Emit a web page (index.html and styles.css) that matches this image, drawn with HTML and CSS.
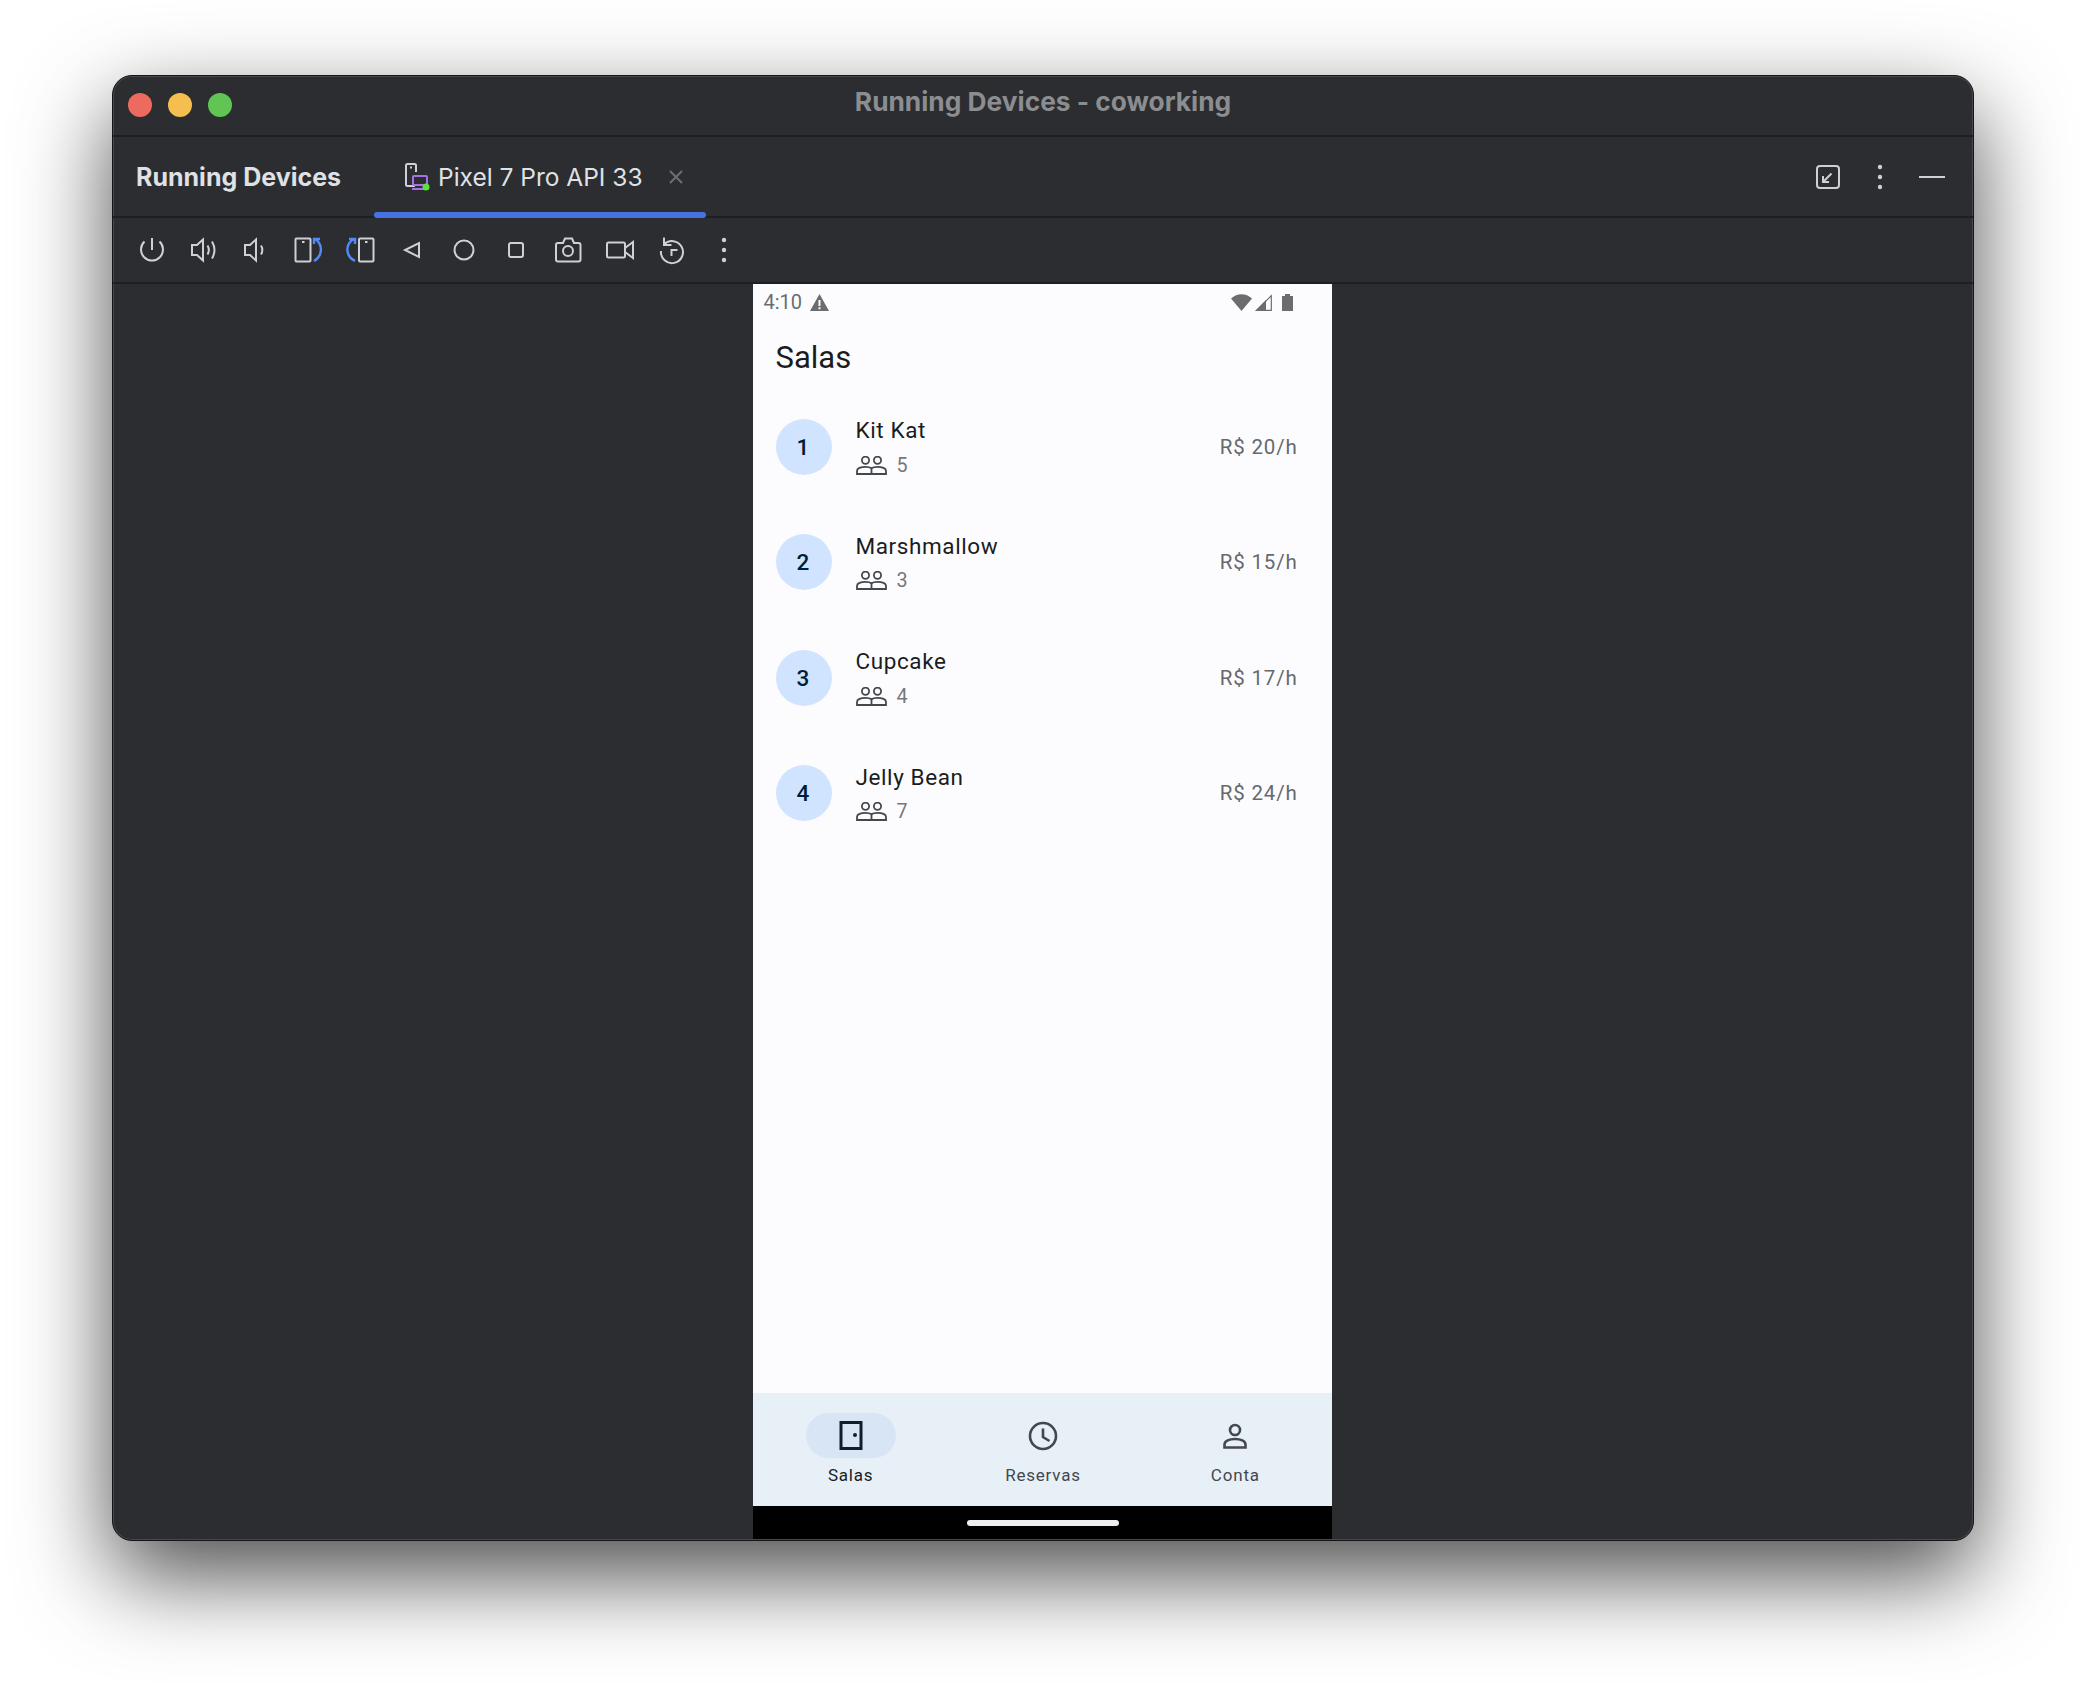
FILE: index.html
```html
<!DOCTYPE html>
<html lang="en">
<head>
  <meta charset="UTF-8">
  <title>Running Devices - coworking</title>
  <link rel="stylesheet" href="styles.css">
</head>
<body>
  <svg class="defs" width="0" height="0">
    <symbol id="people" viewBox="0 0 31 19">
      <circle cx="9.5" cy="4.2" r="3.6"/>
      <circle cx="21.5" cy="4.2" r="3.6"/>
      <path d="M1 18v-3.2c0-2.4 3.8-4 8.5-4 2.6 0 4.800.5 6 1.400 1.200-.9 3.400-1.400 6-1.400 4.700 0 8.500 1.600 8.500 4V18z"/>
      <path d="M15.500 12.200V18"/>
    </symbol>
  </svg>

  <div class="window">
    <div class="titlebar">
      <div class="lights">
        <span class="light red"></span>
        <span class="light yellow"></span>
        <span class="light green"></span>
      </div>
      <div class="window-title">Running Devices - coworking</div>
    </div>

    <div class="tabbar">
      <div class="tool-name">Running Devices</div>
      <div class="tab">
        <svg class="tab-icon" width="27" height="28" viewBox="0 0 27 28">
          <path class="line" d="M11 23H3.500a1.500 1.500 0 0 1-1.500-1.500V2.500A1.500 1.500 0 0 1 3.500 1h7A1.500 1.500 0 0 1 12 2.500V9"/>
          <path class="line" d="M6 4.500h2"/>
          <rect class="purple" x="9" y="13" width="14" height="9" rx="1"/>
          <path class="purple" d="M8 26h12"/>
          <circle cx="22" cy="24" r="3.500" fill="#57e33b"/>
        </svg>
        <span class="tab-label">Pixel 7 Pro API 33</span>
        <svg class="tab-close" width="14" height="14" viewBox="0 0 14 14"><path d="M1 1l12 12M13 1L1 13"/></svg>
      </div>
      <div class="tab-actions">
        <svg class="line" width="24" height="24" viewBox="0 0 24 24">
          <rect x="1" y="1" width="22" height="22" rx="3"/>
          <path d="M15.500 8.500L7 17M7 11v6h6"/>
        </svg>
        <svg width="8" height="26" viewBox="0 0 8 26">
          <circle class="dot" cx="4" cy="3" r="2.200"/><circle class="dot" cx="4" cy="13" r="2.200"/><circle class="dot" cx="4" cy="23" r="2.200"/>
        </svg>
        <span class="minimize"></span>
      </div>
    </div>

    <div class="toolbar">
      <svg class="line" width="32" height="32" viewBox="0 0 32 32"><path d="M8.500 7.500a11 11 0 1 0 15 0M16 4v12"/></svg>
      <svg class="line" width="32" height="32" viewBox="0 0 32 32"><path d="M4 11h5l6-5.500v21L9 21H4zM19.500 11.500c1.800 3 1.800 6 0 9M24 7.500c3.200 5.500 3.200 11.500 0 17"/></svg>
      <svg class="line" width="32" height="32" viewBox="0 0 32 32"><path d="M5 11h5l6-5.500v21L10 21H5zM21 11.500c1.800 3 1.800 6 0 9"/></svg>
      <svg width="32" height="32" viewBox="0 0 32 32">
        <rect class="line" x="3.500" y="4.500" width="15" height="23" rx="1"/>
        <path class="line" d="M10 8h2.500"/>
        <path class="blue" d="M23 5c8 5 8 17-1 22M22 10V5h6"/>
      </svg>
      <svg width="32" height="32" viewBox="0 0 32 32">
        <rect class="line" x="15" y="4.500" width="14.500" height="23" rx="1"/>
        <path class="line" d="M21 8h2.500"/>
        <path class="blue" d="M10 5c-9 5-9 17 1 22M11 10V5H5"/>
      </svg>
      <svg class="line" width="32" height="32" viewBox="0 0 32 32"><path d="M23 9v14L9 16z"/></svg>
      <svg class="line" width="32" height="32" viewBox="0 0 32 32"><circle cx="16" cy="16" r="9.500"/></svg>
      <svg class="line" width="32" height="32" viewBox="0 0 32 32"><rect x="9" y="9" width="14" height="14" rx="2"/></svg>
      <svg class="line" width="32" height="32" viewBox="0 0 32 32">
        <path d="M4 11a2 2 0 0 1 2-2h5l2-4.500h7L22 9h4.500a2 2 0 0 1 2 2v14.500a2 2 0 0 1-2 2H6a2 2 0 0 1-2-2z"/>
        <circle cx="16" cy="17" r="5"/>
      </svg>
      <svg class="line" width="32" height="32" viewBox="0 0 32 32"><rect x="3" y="8.500" width="18" height="15" rx="1.500"/><path d="M21 14l8-6v16l-8-6"/></svg>
      <svg class="line" width="32" height="32" viewBox="0 0 32 32"><path d="M8 3.500V11h7.500M8 10.500A11 11 0 1 1 5 17"/><path d="M15.500 22v-6h6"/></svg>
      <svg width="8" height="26" viewBox="0 0 8 26">
        <circle class="dot" cx="4" cy="3" r="2.200"/><circle class="dot" cx="4" cy="13" r="2.200"/><circle class="dot" cx="4" cy="23" r="2.200"/>
      </svg>
    </div>

    <div class="device-area">
      <div class="phone">
        <div class="statusbar">
          <span class="clock">4:10</span>
          <svg class="status-icon warn" width="19" height="17" viewBox="0 0 19 17"><path d="M9.500 0L19 17H0zM8.500 6v6h2V6zm0 7.200v2h2v-2z" fill-rule="evenodd"/></svg>
          <span class="status-right">
            <svg class="status-icon" width="21" height="17" viewBox="0 0 21 17"><path d="M0 4.500C6-1.200 15-1.200 21 4.500L10.500 17z"/></svg>
            <svg width="17" height="17" viewBox="0 0 17 17"><path d="M16.300 1.700v14.700H1.700z" fill="none" stroke="#6b6c70" stroke-width="1.200"/><path d="M11 6v11H0z" fill="#6b6c70"/></svg>
            <svg class="status-icon" width="11" height="17" viewBox="0 0 11 17"><path d="M3 0h5v2h3v15H0V2h3z"/></svg>
          </span>
        </div>

        <h1 class="app-title">Salas</h1>

        <ul class="room-list">
          <li class="room">
            <div class="room-number">1</div>
            <div class="room-info">
              <div class="room-name">Kit Kat</div>
              <div class="room-seats">
                <svg class="people" width="31" height="19"><use href="#people"/></svg>
                <span>5</span>
              </div>
            </div>
            <div class="room-price">R$ 20/h</div>
          </li>
          <li class="room">
            <div class="room-number">2</div>
            <div class="room-info">
              <div class="room-name">Marshmallow</div>
              <div class="room-seats">
                <svg class="people" width="31" height="19"><use href="#people"/></svg>
                <span>3</span>
              </div>
            </div>
            <div class="room-price">R$ 15/h</div>
          </li>
          <li class="room">
            <div class="room-number">3</div>
            <div class="room-info">
              <div class="room-name">Cupcake</div>
              <div class="room-seats">
                <svg class="people" width="31" height="19"><use href="#people"/></svg>
                <span>4</span>
              </div>
            </div>
            <div class="room-price">R$ 17/h</div>
          </li>
          <li class="room">
            <div class="room-number">4</div>
            <div class="room-info">
              <div class="room-name">Jelly Bean</div>
              <div class="room-seats">
                <svg class="people" width="31" height="19"><use href="#people"/></svg>
                <span>7</span>
              </div>
            </div>
            <div class="room-price">R$ 24/h</div>
          </li>
        </ul>

        <nav class="bottom-nav">
          <div class="nav-item active">
            <div class="nav-pill">
              <svg class="nav-icon" width="24" height="29" viewBox="0 0 24 29">
                <path d="M2 27.500V1.500h20v26z"/>
                <circle cx="16" cy="14" r="2" class="nav-dot"/>
              </svg>
            </div>
            <span>Salas</span>
          </div>
          <div class="nav-item">
            <div class="nav-pill">
              <svg class="nav-icon" width="30" height="30" viewBox="0 0 30 30">
                <circle cx="15" cy="15" r="13"/>
                <path d="M15 7.500V16l6.500 4"/>
              </svg>
            </div>
            <span>Reservas</span>
          </div>
          <div class="nav-item">
            <div class="nav-pill">
              <svg class="nav-icon" width="26" height="26" viewBox="0 0 26 26">
                <circle cx="13" cy="7" r="5"/>
                <path d="M2.500 24.500v-3c0-3.500 5-5.500 10.500-5.500s10.500 2 10.500 5.500v3z"/>
              </svg>
            </div>
            <span>Conta</span>
          </div>
        </nav>

        <div class="gesture-bar"><span class="handle"></span></div>
      </div>
    </div>
  </div>
</body>
</html>
```
FILE: styles.css
```css
html, body {
  margin: 0;
  height: 100%;
}

body {
  background: #fff;
  padding: 75px 112px 147px 112px;
  box-sizing: border-box;
  height: 1688px;
  overflow: hidden;
  font-family: Inter, "Liberation Sans", sans-serif;
}

.defs {
  position: absolute;
}

.window {
  height: 100%;
  box-sizing: border-box;
  display: flex;
  flex-direction: column;
  background: #2b2d30;
  border: 1px solid #151517;
  border-radius: 20px;
  box-shadow: inset 0 0 0 1px #47494c, 0 35px 90px rgba(0, 0, 0, 0.7);
  overflow: hidden;
}

/* title bar */
.titlebar {
  height: 59px;
  flex: none;
  display: flex;
  align-items: center;
  position: relative;
  border-bottom: 2px solid #1e1f22;
}

.lights {
  display: flex;
  gap: 16px;
  padding: 0 0 2px 15px;
}

.light {
  width: 24px;
  height: 24px;
  border-radius: 50%;
}

.red { background: #ed6a5e; }
.yellow { background: #f4bf4f; }
.green { background: #61c554; }

.window-title {
  position: absolute;
  left: 0;
  right: 0;
  top: 10px;
  text-align: center;
  color: #8b8d91;
  font-size: 26.300px;
  font-weight: 700;
}

/* tab row */
.tabbar {
  height: 79px;
  flex: none;
  display: flex;
  align-items: center;
  padding-left: 23px;
  border-bottom: 2px solid #1e1f22;
}

.tool-name {
  width: 238px;
  padding-top: 1px;
  color: #dfe1e5;
  font-size: 25px;
  font-weight: 700;
  white-space: nowrap;
}

.tab {
  width: 332px;
  height: 100%;
  box-sizing: border-box;
  display: flex;
  align-items: center;
  padding-left: 30px;
  position: relative;
}

.tab::after {
  content: "";
  position: absolute;
  left: 0;
  right: 0;
  bottom: -2px;
  height: 6px;
  border-radius: 3px;
  background: #4672e4;
}

.tab-icon {
  flex: none;
  margin-right: 7px;
}

.tab-label {
  color: #dfe1e5;
  font-size: 24.500px;
  white-space: nowrap;
}

.tab-close {
  margin-left: 26px;
  fill: none;
  stroke: #6f7175;
  stroke-width: 1.800;
}

.tab-actions {
  margin-left: auto;
  display: flex;
  align-items: center;
  padding-right: 28px;
}

.tab-actions svg:nth-child(2) {
  margin-left: 36px;
}

.minimize {
  width: 26px;
  height: 2px;
  margin-left: 35px;
  background: #ced0d6;
}

/* toolbar */
.toolbar {
  height: 64px;
  flex: none;
  display: flex;
  align-items: center;
  gap: 20px;
  padding-left: 23px;
  border-bottom: 2px solid #1e1f22;
}

.toolbar > svg:last-child {
  margin-left: 12px;
}

.line {
  fill: none;
  stroke: #ced0d6;
  stroke-width: 2;
}

.blue {
  fill: none;
  stroke: #548af7;
  stroke-width: 2.400;
}

.purple {
  fill: none;
  stroke: #a571e6;
  stroke-width: 2;
}

.dot {
  fill: #ced0d6;
}

/* device */
.device-area {
  flex: 1;
  min-height: 0;
  display: flex;
  justify-content: center;
  padding-right: 2px;
  padding-bottom: 1px;
}

.phone {
  width: 579px;
  display: flex;
  flex-direction: column;
  background: #fcfcff;
  font-family: Roboto, "Liberation Sans", sans-serif;
}

.statusbar {
  height: 36px;
  flex: none;
  display: flex;
  align-items: center;
  padding: 0 39px 0 11px;
  color: #6b6c70;
  font-size: 20px;
}

.status-icon {
  fill: #6b6c70;
}

.warn {
  margin-left: 8px;
}

.status-right {
  margin-left: auto;
  display: flex;
  gap: 3px;
  align-items: center;
}

.status-right svg:last-child {
  margin-left: 7px;
}

.app-title {
  margin: 0;
  height: 69px;
  box-sizing: border-box;
  padding: 5px 23px 0;
  display: flex;
  align-items: center;
  color: #1a1c1e;
  font-size: 31px;
  font-weight: 400;
}

.room-list {
  list-style: none;
  margin: 0;
  padding: 0;
}

.room {
  height: 115.500px;
  box-sizing: border-box;
  display: flex;
  align-items: center;
  padding: 0 34px 0 23px;
}

.room-number {
  width: 56px;
  height: 56px;
  flex: none;
  border-radius: 50%;
  display: flex;
  align-items: center;
  justify-content: center;
  background: #d1e4ff;
  color: #001d36;
  font-size: 22.500px;
  font-weight: 500;
  padding-right: 1px;
  box-sizing: border-box;
}

.room-info {
  flex: 1;
  padding: 0 0 2px 24px;
}

.room-name {
  color: #1a1c1e;
  font-size: 22.500px;
  line-height: 32px;
  letter-spacing: 0.6px;
}

.room-seats {
  display: flex;
  align-items: center;
  gap: 10px;
  margin-top: 7px;
  height: 24px;
  color: #74777c;
  font-size: 19.700px;
}

.people {
  fill: none;
  stroke: #44474e;
  stroke-width: 1.800;
  overflow: visible;
}

.room-price {
  color: #66696e;
  font-size: 20.500px;
  letter-spacing: 0.8px;
}

/* bottom navigation */
.bottom-nav {
  margin-top: auto;
  height: 113px;
  flex: none;
  display: grid;
  grid-template-columns: repeat(3, 1fr);
  padding-left: 2px;
  background: #e8f0f7;
}

.nav-item {
  display: flex;
  flex-direction: column;
  align-items: center;
  padding-top: 20px;
  color: #44474e;
  font-size: 17px;
  font-weight: 400;
  letter-spacing: 0.8px;
}

.nav-pill {
  width: 90px;
  height: 45px;
  border-radius: 23px;
  display: flex;
  align-items: center;
  justify-content: center;
  margin-bottom: 7px;
}

.nav-item.active {
  color: #1a1c1e;
}

.active .nav-pill {
  background: #d7e5f5;
}

.nav-icon {
  fill: none;
  stroke: #44474e;
  stroke-width: 2.600;
}

.active .nav-icon {
  stroke: #0f1d2d;
  stroke-width: 3;
}

.nav-dot {
  fill: #0f1d2d;
  stroke: none;
}

.gesture-bar {
  height: 33px;
  flex: none;
  display: flex;
  justify-content: center;
  padding: 14px 0 0 2px;
  box-sizing: border-box;
  background: #000;
}

.handle {
  width: 152px;
  height: 6px;
  border-radius: 3px;
  background: #eee;
}
```
